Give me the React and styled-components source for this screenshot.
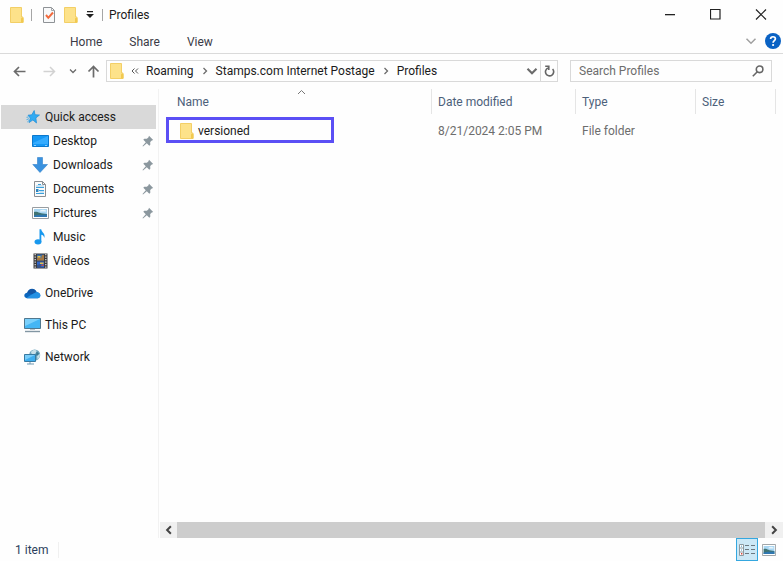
import React, { useState } from 'react'
import styled, { createGlobalStyle } from 'styled-components'

const GlobalStyle = createGlobalStyle`
  * {
    box-sizing: border-box;
  }
  body {
    margin: 0;
    background: #fefefe;
    color: #1b1b1b;
    font: 12px/16px Roboto, "Noto Sans", sans-serif;
  }
  button, input {
    font: inherit;
    color: inherit;
  }
  svg {
    display: block;
    flex: none;
  }
`

const Window = styled.div`
  display: flex;
  flex-direction: column;
  min-height: 100vh;
`

const IconButton = styled.button`
  display: flex;
  align-items: center;
  justify-content: center;
  flex: none;
  width: ${p => p.$width || 20}px;
  height: ${p => p.$height || 20}px;
  padding: 0;
  border: 0;
  background: none;
`

const TitleBar = styled.header`
  display: flex;
  align-items: center;
  height: 29px;
  padding-left: 7px;
`

const Divider = styled.span`
  width: 1px;
  height: 12px;
  margin: 0 6px 0 4px;
  background: #a6a6a6;
`

const Title = styled.h1`
  flex: 1;
  margin: 0;
  font-size: 12px;
  font-weight: 400;
`

const WindowButtons = styled.div`
  display: flex;
`

const Ribbon = styled.nav`
  display: flex;
  align-items: center;
  height: 25px;
  padding-left: 61px;
  border-bottom: 1px solid #dadada;
`

const Tab = styled.button`
  height: 24px;
  margin-right: 9px;
  padding: 2px 9px 0;
  border: 0;
  background: none;
  color: #3b3b46;
`

const RibbonEnd = styled.div`
  display: flex;
  align-items: center;
  gap: 2px;
  margin-left: auto;
`

const AddressRow = styled.div`
  display: flex;
  align-items: flex-start;
  height: 35px;
  padding: 6px 11px 0 9px;
`

const NavButtons = styled.div`
  display: flex;
  align-items: center;
  width: 97px;
  height: 22px;
`

const AddressBar = styled.div`
  display: flex;
  align-items: center;
  flex: 1;
  height: 22px;
  border: 1px solid #d9d9d9;
`

const Crumbs = styled.div`
  display: flex;
  align-items: center;
  gap: 7px;
  flex: 1;
  padding-left: 3px;
`

const Crumb = styled.a`
  color: #1b1b1b;
  text-decoration: none;
  white-space: nowrap;
`

const Refresh = styled(IconButton)`
  border-left: 1px solid #d9d9d9;
`

const SearchBox = styled.label`
  display: flex;
  align-items: center;
  width: 202px;
  height: 22px;
  margin-left: 12px;
  padding: 0 7px 0 8px;
  border: 1px solid #d9d9d9;
`

const SearchInput = styled.input`
  flex: 1;
  min-width: 0;
  padding: 0;
  border: 0;
  outline: 0;
  background: none;

  &::placeholder {
    color: #6d6d6d;
    opacity: 1;
  }
`

const Body = styled.div`
  display: flex;
  flex: 1;
`

const Sidebar = styled.nav`
  flex: none;
  width: 159px;
  padding: 16px 2px 0 1px;
  border-right: 1px solid #f2f2f2;
`

const NavList = styled.ul`
  margin: 0 0 8px;
  padding: 0;
  list-style: none;
`

const NavItem = styled.a`
  display: flex;
  align-items: center;
  gap: 4px;
  height: 24px;
  padding: 0 2px 0 ${p => (p.$nested ? 31 : 23)}px;
  background: ${p => (p.$active ? '#d9d9d9' : 'none')};
  color: #1b1b1b;
  text-decoration: none;
`

const NavLabel = styled.span`
  flex: 1;
`

const Main = styled.main`
  display: flex;
  flex-direction: column;
  flex: 1;
  min-width: 0;
  padding-left: 1px;
`

const TableArea = styled.div`
  flex: 1;
  padding-right: 7px;
`

const Files = styled.table`
  width: 100%;
  table-layout: fixed;
  border-collapse: separate;
  border-spacing: 0;
`

const Heading = styled.th`
  position: relative;
  width: ${p => (p.$width ? `${p.$width}px` : 'auto')};
  height: 25px;
  padding: 0 0 0 ${p => (p.$width ? 6 : 17)}px;
  border-right: 1px solid #e5e5e5;
  color: #4c607a;
  font-weight: 400;
  text-align: left;
`

const SortButton = styled.button`
  padding: 0;
  border: 0;
  background: none;
`

const SortMark = styled.svg`
  position: absolute;
  top: 0;
  left: 50%;
`

const Cell = styled.td`
  padding: 5px 0 0 6px;
  color: #6d6d6d;
`

const NameCell = styled(Cell)`
  padding-top: 3px;
`

const FileLink = styled.a`
  display: flex;
  align-items: center;
  gap: 4px;
  width: 168px;
  height: 26px;
  padding: 2px 0 0 11px;
  border: 3px solid #5b4ff5;
  color: #1b1b1b;
  text-decoration: none;
`

const ScrollBar = styled.div`
  display: flex;
  height: 16px;
  background: #f0f0f0;
`

const ScrollThumb = styled.div`
  flex: 1;
  background: #cdcdcd;
`

const StatusBar = styled.footer`
  display: flex;
  align-items: center;
  height: 23px;
  padding: 0 3px 0 15px;
`

const Count = styled.span`
  padding-right: 10px;
  border-right: 1px solid #f0f0f0;
  color: #2b3e5c;
`

const ViewButtons = styled.div`
  display: flex;
  margin-left: auto;
`

const ViewButton = styled(IconButton)`
  border: 1px solid ${p => (p.$active ? '#35a7df' : 'transparent')};
  background: ${p => (p.$active ? '#cce8f6' : 'none')};
`

const FolderIcon = () => (
  <svg width="14" height="16" viewBox="0 0 14 16">
    <path d="M.5.5h11v9.5h1.5v5.5H.5z" fill="#fde28a" stroke="#f3cf66" />
    <path d="M11 11.5c0-1 2.5-1 2.5 0v4H11z" fill="#f2c94f" />
  </svg>
)

const PropertiesIcon = () => (
  <svg width="14" height="16" viewBox="0 0 14 16" fill="none">
    <path d="M1.5.5h8l3 3v12h-11z" fill="#f8f9fa" stroke="#8e9296" />
    <path d="M9.5.5v3h3" stroke="#a5a8ab" />
    <path d="M4 8l2.3 2.8L11 5.5" stroke="#f26a3d" strokeWidth="2" />
  </svg>
)

const CustomizeIcon = () => (
  <svg width="8" height="7" viewBox="0 0 8 7" fill="#222">
    <path d="M1 0h6v1.3H1zM0 3h8L4 7z" />
  </svg>
)

const Arrow = ({ color, up }) => (
  <svg width="13" height="13" viewBox="0 0 13 13" fill="none" stroke={color} strokeWidth="1.7">
    {up ? <path d="M6.5 12.5V1.5M1.5 6.5l5-5 5 5" /> : <path d="M12.5 6.5h-11M6 2L1.5 6.5 6 11" />}
  </svg>
)

const ForwardArrow = () => (
  <svg width="13" height="13" viewBox="0 0 13 13" fill="none" stroke="#d2d2d2" strokeWidth="1.5">
    <path d="M.5 6.5h11M7 2l4.5 4.5L7 11" />
  </svg>
)

const chevrons = {
  down: 'M1 2.5l3 3 3-3',
  right: 'M2.5 1l3 3-3 3',
  left: 'M5.5 1l-3 3 3 3',
}

const Chevron = ({ dir = 'down', size = 8, color = '#6b6b6b', weight = 1.3 }) => (
  <svg width={size} height={size} viewBox="0 0 8 8" fill="none" stroke={color} strokeWidth={weight}>
    <path d={chevrons[dir]} />
  </svg>
)

const OverflowIcon = () => (
  <svg width="8" height="8" viewBox="0 0 8 8" fill="none" stroke="#555">
    <path d="M3.5 1.5L1 4l2.5 2.5M7 1.5L4.5 4 7 6.5" />
  </svg>
)

const RefreshIcon = () => (
  <svg width="11" height="12" viewBox="0 0 11 12" fill="none" stroke="#666" strokeWidth="1.6">
    <path d="M8.6 4A4.1 4.1 0 1 1 4 3" />
    <path d="M1.2 1.3h3.6v3.6" />
  </svg>
)

const SearchIcon = () => (
  <svg width="12" height="12" viewBox="0 0 12 12" fill="none" stroke="#666" strokeWidth="1.6">
    <circle cx="7.6" cy="4.3" r="3.3" />
    <path d="M5.3 6.8L.8 11.3" />
  </svg>
)

const HelpIcon = () => (
  <svg width="16" height="16" viewBox="0 0 16 16">
    <circle cx="8" cy="8" r="8" fill="#0a62c4" />
    <path d="M5.6 6.1c0-3.2 4.8-3 4.8-.3 0 1.7-2.3 1.8-2.3 3.9" fill="none" stroke="#fff" strokeWidth="1.7" />
    <circle cx="8.1" cy="12" r="1.1" fill="#fff" />
  </svg>
)

const MinimizeIcon = () => (
  <svg width="12" height="12" viewBox="0 0 12 12">
    <path d="M0 5h10v1.3H0z" fill="#222" />
  </svg>
)

const MaximizeIcon = () => (
  <svg width="12" height="12" viewBox="0 0 12 12">
    <path d="M.5.5h9.5v9.5H.5z" fill="none" stroke="#222" strokeWidth="1.2" />
  </svg>
)

const CloseIcon = () => (
  <svg width="12" height="12" viewBox="0 0 12 12">
    <path d="M1 .5l10 10M11 .5l-10 10" stroke="#222" strokeWidth="1.2" />
  </svg>
)

const StarIcon = () => (
  <svg width="17" height="16" viewBox="0 0 17 16">
    <path d="M10.2 1.5l.8 4.2 4.5.3-3.6 2.9.6 5.1-3.6-3-3.9 2.6 1.3-4.5L4 6.2l3.8-.4z" fill="#31aaf2" stroke="#1b8cd8" strokeWidth=".7" />
    <path d="M4.5 8l-2 .3M5 9.7l-2.5 1M5 11.5L3.3 13" stroke="#48aee8" />
  </svg>
)

const DesktopIcon = () => (
  <svg width="17" height="16" viewBox="0 0 17 16">
    <path d="M.5 2.5h16v11H.5z" fill="#1698f5" stroke="#0c78cd" />
    <path d="M1 10L16 3v8H1z" fill="#36acff" />
    <path d="M2 12.5h2M13 12.5h2" stroke="#8fd0ff" />
  </svg>
)

const DownloadsIcon = () => (
  <svg width="17" height="16" viewBox="0 0 17 16">
    <path d="M5.5.5h5v7h5L8 15.5.8 7.5h4.7z" fill="#3a92df" stroke="#2f7fc9" strokeWidth=".6" />
  </svg>
)

const DocumentsIcon = () => (
  <svg width="17" height="16" viewBox="0 0 17 16">
    <path d="M2.5.5h8l3 3v12h-11z" fill="#fafafa" stroke="#8a8e92" />
    <path d="M10.5.5v3h3" fill="none" stroke="#8a8e92" />
    <path d="M6 3.5h3M4 6.5h8M7 9.5h5M4 12.5h8" stroke="#3aa0dc" strokeWidth="1.2" />
    <path d="M4 8h2.5v3H4z" fill="#2c83bd" />
    <path d="M4 5h8M7.5 11h4.5" stroke="#9dcbe8" />
  </svg>
)

const PicturesIcon = ({ width = 17 }) => (
  <svg width={width} height="16" viewBox="0 0 17 16" preserveAspectRatio="none">
    <path d="M.5 2.5h16v11H.5z" fill="#fff" stroke="#989da1" />
    <path d="M2 4h13v8H2z" fill="#a8d6f2" />
    <path d="M2 7c4-1 5 2 13 2v3H2z" fill="#3f7373" />
    <path d="M2 10.5c5-1 8-.5 13-1V12H2z" fill="#2f77b1" />
    <path d="M8 5.5c2-1 4-1 6 0v1H8z" fill="#e7f4fb" />
  </svg>
)

const MusicIcon = () => (
  <svg width="17" height="16" viewBox="0 0 17 16">
    <ellipse cx="6" cy="12.8" rx="3.5" ry="2.6" fill="#1898ee" />
    <path d="M7.5.3h1.7c.3 3.2 4.6 4 3.1 8.7-.6-2.3-1.6-2.9-3-3.2v7H7.5z" fill="#1898ee" />
  </svg>
)

const VideosIcon = () => (
  <svg width="17" height="16" viewBox="0 0 17 16">
    <path d="M1.5.5h14v15h-14z" fill="#3b3b3e" />
    <path d="M3.2 1v14M13.8 1v14" stroke="#d8d8d8" strokeWidth="1.3" strokeDasharray="1.2 1.3" />
    <path d="M5 1.5h7v6H5z" fill="#386eae" />
    <path d="M5 8.5h7v6H5z" fill="#2f67c9" />
    <path d="M5 5l2-1.5 2 2 1-3.5h2v5.5H5z" fill="#a67842" />
    <path d="M5.5 3h3v1.5h-3zM8 9.5h3.5V11H8z" fill="#e3c04b" />
    <path d="M5 12l3-1 2 1.5-1.5 2H5z" fill="#36538a" />
    <path d="M9.5 11.5h2v1.5h-2z" fill="#cf4a45" />
  </svg>
)

const OneDriveIcon = () => (
  <svg width="17" height="16" viewBox="0 0 17 16">
    <path d="M3 13.2C-.8 12.5-.4 8 3.2 7.7 4.4 3 10.5 2 12.6 7c4 .2 5.3 5.4 1.4 6.2z" fill="#0b66bd" />
    <path d="M3.2 7.7C5 3 10.5 2.6 12.6 7L8 9.3z" fill="#1556a4" />
    <path d="M2.5 13C5 10.8 8.3 9 12.6 7c4.3.5 5.2 5.4 1.4 6.2H3z" fill="#2491e4" />
  </svg>
)

const PcIcon = () => (
  <svg width="17" height="16" viewBox="0 0 17 16">
    <path d="M.5 1.5h16v10H.5z" fill="#45b6f4" stroke="#50788f" />
    <path d="M1 2h15L1 9z" fill="#7bd0fb" />
    <path d="M6 12h5v1H6z" fill="#b7c4cc" />
    <path d="M1 14.5h15" stroke="#8296a3" strokeWidth="1.4" />
  </svg>
)

const NetworkIcon = () => (
  <svg width="17" height="16" viewBox="0 0 17 16">
    <circle cx="10.7" cy="6" r="5.5" fill="#6da5bd" />
    <path d="M7 3c2-3 5-2 6-1l-2 3-3 1zM13 6l3-1c0 3-1 4-2.5 5.5z" fill="#c8e0e8" />
    <path d="M12.5 2.5l2.5 2-1 2h-2z" fill="#397892" />
    <path d="M.5 5.5h11v7H.5z" fill="#3eaeef" stroke="#3879a0" />
    <path d="M1 6h10L1 11z" fill="#79cdf9" />
    <path d="M3 15h7M6 13v2" stroke="#6f99b3" />
  </svg>
)

const PinIcon = () => (
  <svg width="12" height="12" viewBox="0 0 12 12">
    <path d="M7 .8L11.2 5l-1.4.5-1.6 1.6.1 2.6-1 1-2.5-2.5L1 11.5l-.5-.5 3.3-3.8L1.3 4.7l1-1 2.6.1 1.6-1.6z" fill="#8b979e" />
  </svg>
)

const DetailsIcon = () => (
  <svg width="16" height="14" viewBox="0 0 16 14" fill="none">
    <path d="M.5 1.5h4v11h-4zM.5 5h4M.5 9h4" fill="#fff" stroke="#8d9aa1" />
    <path d="M2 3.2h1M2 7h1" stroke="#4b9ac5" />
    <path d="M2 10.8h1.4" stroke="#dc4b3e" strokeWidth="1.4" />
    <path d="M6 2.5h4M12 2.5h4M6 6.5h4M12 6.5h4M6 10.5h4M12 10.5h4" stroke="#6c7880" />
  </svg>
)

const quickAccess = [
  { name: 'Desktop', Icon: DesktopIcon, pinned: true },
  { name: 'Downloads', Icon: DownloadsIcon, pinned: true },
  { name: 'Documents', Icon: DocumentsIcon, pinned: true },
  { name: 'Pictures', Icon: PicturesIcon, pinned: true },
  { name: 'Music', Icon: MusicIcon },
  { name: 'Videos', Icon: VideosIcon },
]

const places = [
  { name: 'OneDrive', Icon: OneDriveIcon },
  { name: 'This PC', Icon: PcIcon },
  { name: 'Network', Icon: NetworkIcon },
]

const path = ['Roaming', 'Stamps.com Internet Postage', 'Profiles']

const files = [{ name: 'versioned', modified: '8/21/2024 2:05 PM', type: 'File folder', size: '' }]

function NavEntry({ name, Icon, pinned, nested, active }) {
  return (
    <li>
      <NavItem href="#" $nested={nested} $active={active}>
        <Icon />
        <NavLabel>{name}</NavLabel>
        {pinned && <PinIcon />}
      </NavItem>
    </li>
  )
}

export default function App() {
  const [query, setQuery] = useState('')
  const [view, setView] = useState('details')

  return (
    <>
      <GlobalStyle />
      <Window>
        <TitleBar>
          <IconButton aria-label="Window menu"><FolderIcon /></IconButton>
          <Divider />
          <IconButton aria-label="Properties" $width={22}><PropertiesIcon /></IconButton>
          <IconButton aria-label="New folder" $width={22}><FolderIcon /></IconButton>
          <IconButton aria-label="Customize toolbar" $width={16}><CustomizeIcon /></IconButton>
          <Divider />
          <Title>Profiles</Title>
          <WindowButtons>
            <IconButton aria-label="Minimize" $width={45}><MinimizeIcon /></IconButton>
            <IconButton aria-label="Maximize" $width={45}><MaximizeIcon /></IconButton>
            <IconButton aria-label="Close" $width={45}><CloseIcon /></IconButton>
          </WindowButtons>
        </TitleBar>
        <Ribbon>
          <Tab>Home</Tab>
          <Tab>Share</Tab>
          <Tab>View</Tab>
          <RibbonEnd>
            <IconButton aria-label="Expand ribbon"><Chevron size={12} color="#a0a0a0" weight={1} /></IconButton>
            <IconButton aria-label="Help"><HelpIcon /></IconButton>
          </RibbonEnd>
        </Ribbon>
        <AddressRow>
          <NavButtons>
            <IconButton aria-label="Back"><Arrow color="#6b6b6b" /></IconButton>
            <IconButton aria-label="Forward" $width={40}><ForwardArrow /></IconButton>
            <IconButton aria-label="Recent locations" $width={8}><Chevron /></IconButton>
            <IconButton aria-label="Up" $width={32}><Arrow color="#6b6b6b" up /></IconButton>
          </NavButtons>
          <AddressBar>
            <Crumbs>
              <FolderIcon />
              <OverflowIcon />
              {path.map((name, i) => (
                <React.Fragment key={name}>
                  {i > 0 && <Chevron dir="right" />}
                  <Crumb href="#">{name}</Crumb>
                </React.Fragment>
              ))}
            </Crumbs>
            <IconButton aria-label="Previous locations" $width={16}><Chevron size={12} weight={1.4} /></IconButton>
            <Refresh aria-label="Refresh" $width={17}><RefreshIcon /></Refresh>
          </AddressBar>
          <SearchBox>
            <SearchInput
              aria-label="Search Profiles"
              placeholder="Search Profiles"
              value={query}
              onChange={e => setQuery(e.target.value)}
            />
            <SearchIcon />
          </SearchBox>
        </AddressRow>
        <Body>
          <Sidebar>
            <NavList>
              <NavEntry name="Quick access" Icon={StarIcon} active />
              {quickAccess.map(item => <NavEntry key={item.name} {...item} nested />)}
            </NavList>
            {places.map(item => (
              <NavList key={item.name}>
                <NavEntry {...item} />
              </NavList>
            ))}
          </Sidebar>
          <Main>
            <TableArea>
              <Files>
                <thead>
                  <tr>
                    <Heading aria-sort="ascending">
                      <SortButton>Name</SortButton>
                      <SortMark width="11" height="6" viewBox="0 0 11 6" fill="none" stroke="#777">
                        <path d="M2 5l3.5-3.5L9 5" />
                      </SortMark>
                    </Heading>
                    <Heading $width={144}><SortButton>Date modified</SortButton></Heading>
                    <Heading $width={120}><SortButton>Type</SortButton></Heading>
                    <Heading $width={80}><SortButton>Size</SortButton></Heading>
                  </tr>
                </thead>
                <tbody>
                  {files.map(file => (
                    <tr key={file.name}>
                      <NameCell>
                        <FileLink href="#"><FolderIcon />{file.name}</FileLink>
                      </NameCell>
                      <Cell>{file.modified}</Cell>
                      <Cell>{file.type}</Cell>
                      <Cell>{file.size}</Cell>
                    </tr>
                  ))}
                </tbody>
              </Files>
            </TableArea>
            <ScrollBar>
              <IconButton aria-label="Scroll left" $width={17} $height={16}><Chevron dir="left" size={10} color="#444" weight={1.6} /></IconButton>
              <ScrollThumb />
              <IconButton aria-label="Scroll right" $width={18} $height={16}><Chevron dir="right" size={10} color="#444" weight={1.6} /></IconButton>
            </ScrollBar>
          </Main>
        </Body>
        <StatusBar>
          <Count>1 item</Count>
          <ViewButtons>
            <ViewButton aria-label="Details view" $width={22} $height={23} $active={view === 'details'} onClick={() => setView('details')}>
              <DetailsIcon />
            </ViewButton>
            <ViewButton aria-label="Thumbnail view" $width={22} $height={23} $active={view === 'icons'} onClick={() => setView('icons')}>
              <PicturesIcon width={14} />
            </ViewButton>
          </ViewButtons>
        </StatusBar>
      </Window>
    </>
  )
}
